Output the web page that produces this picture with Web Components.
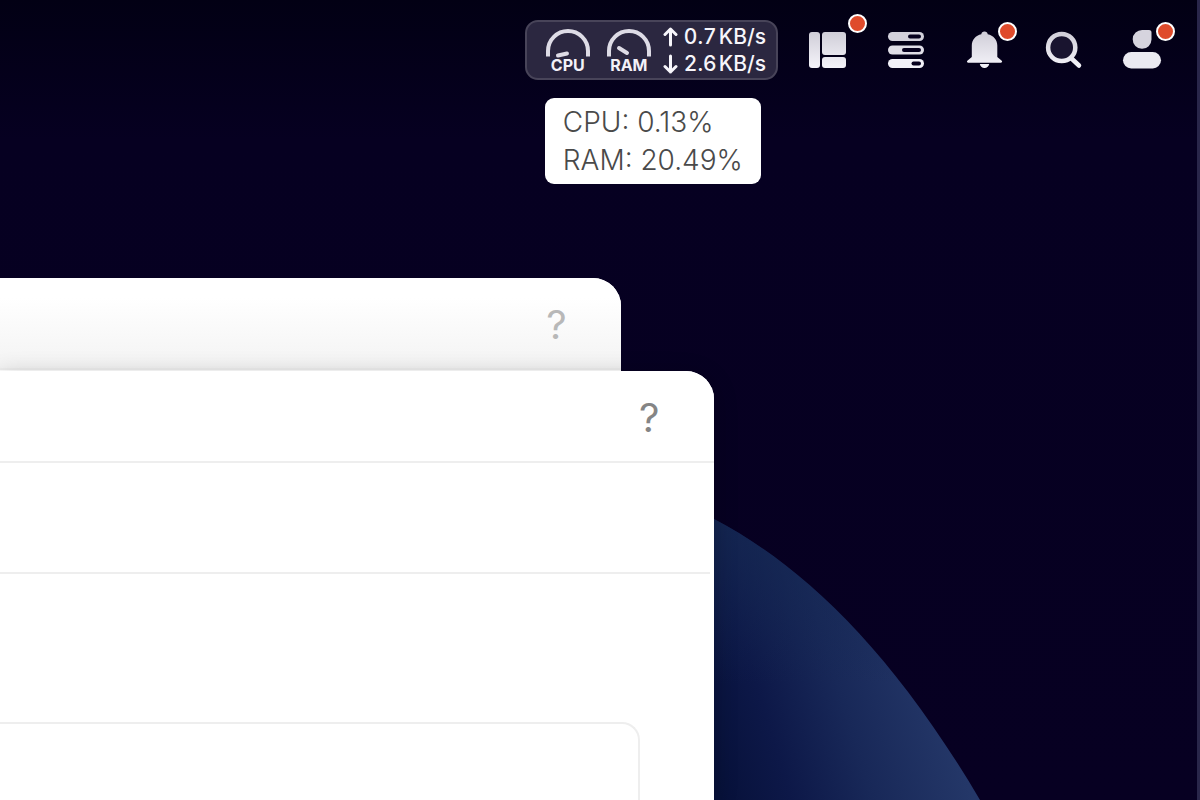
<!DOCTYPE html>
<html lang="en">
<head>
<meta charset="utf-8">
<title>Desktop</title>
<style>
html,body{margin:0;height:100%}
body{font-family:Inter,"Noto Sans",sans-serif;background:#060022;overflow:hidden}
</style>
</head>
<body>
<desk-top>
  <task-bar slot="bar">
    <resource-monitor></resource-monitor>
    <tray-button label="Widgets" badge="far">
      <svg viewBox="0 0 38 40" width="38" height="40"><g fill="url(#g)"><rect x="2" y="2" width="11" height="36" rx="3"/><rect x="15" y="2" width="24" height="23" rx="3"/><rect x="15" y="27" width="24" height="11" rx="3"/></g><defs><linearGradient id="g" gradientUnits="userSpaceOnUse" x1="0" y1="2" x2="0" y2="38"><stop stop-color="#d0ced8"/><stop offset="1" stop-color="#f5f4fa"/></linearGradient></defs></svg>
    </tray-button>
    <tray-button label="Tasks">
      <svg viewBox="0 0 38 40" width="38" height="40"><g><rect x="2" y="2" width="36" height="9" rx="4.5" fill="#d3d1db"/><rect x="2" y="15.500" width="36" height="9" rx="4.500" fill="#e0dee7"/><rect x="2" y="29" width="36" height="9" rx="4.500" fill="#f2f1f8"/></g><g fill="#06001e"><rect x="22" y="4.500" width="13" height="4" rx="2"/><rect x="16" y="18" width="19" height="4" rx="2"/><rect x="25.500" y="31.500" width="9.500" height="4" rx="2"/></g></svg>
    </tray-button>
    <tray-button label="Notifications" badge="near">
      <svg viewBox="0 0 38 40" width="38" height="40"><path fill="url(#g)" d="M19.500 1.500a3.200 3.200 0 0 1 3.200 2.800c5.700 1.200 9.600 5.500 9.600 11.200V27l3.900 3.300c1.700 1.400.8 2.500-.8 2.500H3.700c-1.600 0-2.500-1.100-.8-2.500L6.800 27V15.500c0-5.700 3.900-10 9.500-11.200a3.200 3.200 0 0 1 3.200-2.800zM14.800 34h9.400c-.3 2.300-2.200 4-4.700 4s-4.400-1.700-4.700-4z"/><defs><linearGradient id="g" gradientUnits="userSpaceOnUse" x1="0" y1="2" x2="0" y2="38"><stop stop-color="#cfcdd7"/><stop offset="1" stop-color="#f5f4fa"/></linearGradient></defs></svg>
    </tray-button>
    <tray-button label="Search">
      <svg viewBox="0 0 38 40" width="38" height="40"><g fill="none" stroke="url(#g)"><circle cx="17.700" cy="17.500" r="13.600" stroke-width="4.500" fill="#19142f"/><path d="M27 28l8 7.500" stroke-width="4.500" stroke-linecap="round"/></g><defs><linearGradient id="g" gradientUnits="userSpaceOnUse" x1="0" y1="2" x2="0" y2="38"><stop stop-color="#cfcdd7"/><stop offset="1" stop-color="#f7f6fb"/></linearGradient></defs></svg>
    </tray-button>
    <tray-button label="Account" badge="near">
      <svg viewBox="0 0 38 40" width="38" height="40"><path fill="#d6d4de" d="M19.300 0H26a2.500 2.500 0 0 1 2.500 2.500v7A9.400 9.400 0 1 1 19.300 0z"/><rect x="0" y="22" width="38" height="16.500" rx="8.250" fill="#ebeaf1"/></svg>
    </tray-button>
  </task-bar>
  <app-window slot="windows" class="back"></app-window>
  <app-window slot="windows" class="front">
    <window-pane></window-pane>
  </app-window>
</desk-top>
<script>
const define=(name,html,setup)=>customElements.define(name,class extends HTMLElement{
  constructor(){super();this.attachShadow({mode:'open'}).innerHTML=html}
  connectedCallback(){if(setup)setup(this,this.shadowRoot)}
});

define('desk-top',`<style>
:host{display:block;position:relative;height:100vh;overflow:hidden;box-sizing:border-box;border-right:3px solid #29264a;background:linear-gradient(#020014,#060021 140px,#070022)}
.planet{position:absolute;left:0;bottom:0;width:1000px;height:300px}
::slotted(app-window){position:absolute;left:0;bottom:0}
::slotted(.back){top:278px;width:calc(51.75% + 2px);--title-bg:linear-gradient(#fff 0,#fff 20px,#f3f3f3 92px);--mark:#b8b8b8}
::slotted(.front){top:371px;width:calc(59.5% + 2px);box-shadow:0 4px 24px rgba(0,0,0,.2)}
</style>
<svg class="planet" viewBox="0 500 1000 300" aria-hidden="true">
<defs>
<linearGradient id="a" gradientUnits="userSpaceOnUse" x1="700" y1="730" x2="930" y2="660"><stop stop-color="#07113a"/><stop offset=".28" stop-color="#0d1848"/><stop offset=".6" stop-color="#182858"/><stop offset="1" stop-color="#243768"/></linearGradient>
<linearGradient id="b" x1="0" y1="0" x2="0" y2="1"><stop stop-color="#152852" stop-opacity=".8"/><stop offset=".6" stop-color="#152852" stop-opacity="0"/></linearGradient></defs>
<path fill="url(#a)" d="M700 511L714 519C800 564 890 647 980 800H700Z"/>
<path fill="url(#b)" d="M700 511L714 519C800 564 890 647 980 800H700Z"/>
</svg>
<slot name="windows"></slot><slot name="bar"></slot>`);

define('task-bar',`<style>
:host{display:flex;position:relative;justify-content:flex-end;align-items:center;gap:41px;padding:20px 36px 0 0}
::slotted(resource-monitor){margin-right:-12px}
</style><slot></slot>`);

define('tray-button',`<style>
:host{display:block;position:relative;width:38px;height:40px}
button{display:block;width:100%;height:100%;padding:0;border:0;background:none;cursor:pointer}
i{display:none;position:absolute;box-sizing:border-box;width:19px;height:19px;border:2px solid #fff;border-radius:50%;background:#df4b2b}
:host([badge]) i{display:block}
:host([badge=near]) i{top:-8px;right:-14px}
:host([badge=far]) i{top:-16px;right:-22px}
::slotted(svg){display:block;overflow:visible}
</style><button type="button"><slot></slot></button><i></i>`,(el,r)=>r.querySelector('button').setAttribute('aria-label',el.getAttribute('label')));

define('dial-gauge',`<style>
:host{display:flex;flex-direction:column;align-items:center;width:46px}
svg{display:block}
span{font-size:16px;font-weight:700;line-height:16px;margin-top:-2px;color:#f3f1f8}
</style><svg width="46" height="31" viewBox="0 0 46 31" fill="none" stroke-linecap="round"><path d="M3 28.500V23a20 20 0 0 1 40 0v5.500" stroke="#dedce6" stroke-width="4" stroke-linecap="butt"/><path class="n" stroke="#dedce6" stroke-width="4"/></svg><span><slot></slot></span>`,
(el,r)=>r.querySelector('.n').setAttribute('d',el.getAttribute('needle')));

define('resource-monitor',`<style>
:host{display:block;position:relative}
.panel{display:flex;align-items:center;box-sizing:border-box;height:60px;padding:0 10px 0 18px;border:2px solid #484459;border-radius:13px;background:#2b2740}
.gauges{display:flex;gap:15px;margin-right:11px}
.rates{display:grid;gap:3px;padding-top:1px;color:#f7f6fb}
.rate{display:flex;align-items:center;gap:6px;font-size:21px;line-height:24px;font-weight:500}
.rate span{display:flex;gap:2px}
b{font-weight:500;font-variant-numeric:tabular-nums}
.tip{position:absolute;top:78px;left:20px;box-sizing:border-box;padding:5px 18px;border-radius:9px;background:#fff;color:#4a4a4a;font-size:28px;line-height:38px;font-weight:300;white-space:nowrap}
</style>
<div class="panel">
<div class="gauges"><dial-gauge needle="M13 27.500L22 25.500">CPU</dial-gauge><dial-gauge needle="M13 20L21 25">RAM</dial-gauge></div>
<div class="rates">
<div class="rate"><svg width="15" height="20" viewBox="0 0 15 20" fill="none" stroke="currentColor" stroke-width="3" stroke-linecap="round" stroke-linejoin="round"><path d="M7.500 18V2M2 7.500l5.500-5.500L13 7.500"/></svg><span><b>0.7</b>KB/s</span></div>
<div class="rate"><svg width="15" height="20" viewBox="0 0 15 20" fill="none" stroke="currentColor" stroke-width="3" stroke-linecap="round" stroke-linejoin="round"><path d="M7.500 2v16M2 12.500l5.500 5.500 5.500-5.500"/></svg><span><b>2.6</b>KB/s</span></div>
</div></div>
<div class="tip" role="tooltip"><div>CPU: 0.13%</div><div>RAM: 20.49%</div></div>`);

define('app-window',`<style>
:host{display:flex;flex-direction:column;overflow:hidden;border-radius:0 28px 0 0;background:#fff}
header{display:flex;justify-content:flex-end;align-items:center;box-sizing:border-box;height:92px;padding:3px 50px 0 0;border-bottom:2px solid #eee;background:var(--title-bg,#fff)}
button{width:30px;height:48px;padding:0;border:0;background:none;font:400 40px/48px Inter,sans-serif;color:var(--mark,#858585);cursor:pointer}
</style><header><button type="button" aria-label="Help">?</button></header><slot></slot>`);

define('window-pane',`<style>
:host{display:flex;flex-direction:column;flex:1}
.tools{box-sizing:border-box;height:111px;margin-right:4px;border-bottom:2px solid #eee}
.card{flex:1;margin:148px 74px 0 0;border:solid #eee;border-width:2px 2px 0 0;border-radius:0 18px 0 0}
</style><div class="tools"></div><div class="card"></div>`);
</script>
</body>
</html>
